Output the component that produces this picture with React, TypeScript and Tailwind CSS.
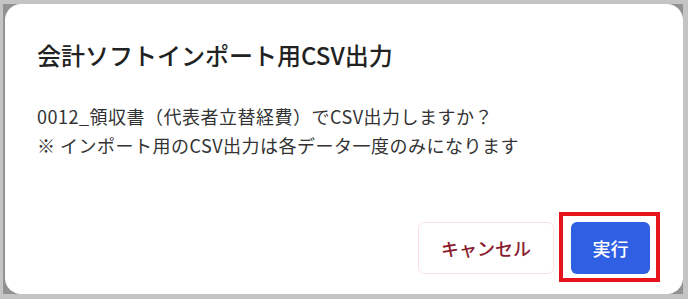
export default function App() {
  const font = { fontFamily: '"Noto Sans CJK JP", "Noto Sans", sans-serif' };
  return (
    <div
      className="w-[688px] h-[299px] bg-[#c4c4c4] pt-[4px] pl-[3px] pr-[5px] pb-[5px]"
      style={font}
    >
      <div className="h-full bg-[#929292] pl-[2px]">
        <div className="h-full bg-white rounded-[16px] flex flex-col pl-[32px] pr-[33px] pt-[35px] pb-[20px]">
          <h2 className="text-[24px] leading-[32px] font-medium text-[#222222]">
            会計ソフトインポート用CSV出力
          </h2>
          <div className="mt-[31px] text-[18px] leading-[29px] tracking-[0.5px] text-[#333333]">
            <p>0012_領収書（代表者立替経費）でCSV出力しますか？</p>
            <p>※ インポート用のCSV出力は各データ一度のみになります</p>
          </div>
          <div className="mt-auto flex justify-end gap-[17px]">
            <button
              type="button"
              className="h-[52px] w-[136px] rounded-[6px] border border-[#fbe0e3] bg-white text-[18px] font-medium text-[#8a1d2c]"
            >
              キャンセル
            </button>
            <div className="relative">
              <button
                type="button"
                className="h-[52px] w-[79px] rounded-[6px] bg-[#2f5fe3] text-[18px] font-medium text-white"
              >
                実行
              </button>
              <div className="absolute -left-[12px] -top-[10px] -right-[10px] -bottom-[8px] border-4 border-[#e8141c] pointer-events-none" />
            </div>
          </div>
        </div>
      </div>
    </div>
  );
}
